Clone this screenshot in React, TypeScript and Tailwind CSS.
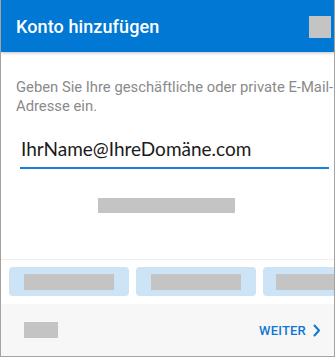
export default function App() {
  return (
    <div
      className="w-[335px] h-[357px] bg-white border-x border-b border-[#a3a3a3] flex flex-col overflow-hidden"
      style={{ fontFamily: "Roboto, 'Noto Sans', sans-serif" }}
    >
      <div className="h-[52px] shrink-0 bg-[#0078d4] flex items-center justify-between pl-[15px] pr-[3px] shadow-[0_1px_3px_rgba(0,0,0,0.25)] relative z-10">
        <div className="text-white text-[18px] font-medium tracking-[0.1px]">Konto hinzufügen</div>
        <div className="w-[22px] h-[22px] bg-[#c4c4c4] mt-[2px]" />
      </div>

      <div className="flex-1 flex flex-col">
        <p className="mt-[26px] pl-[15px] text-[14.8px] leading-[19px] text-[#8a8a8a] whitespace-nowrap">
          Geben Sie Ihre geschäftliche oder private E-Mail-
          <br />
          Adresse ein.
        </p>

        <div className="mt-[19px] ml-[19px] mr-[5px] border-b-2 border-[#1a7fd8] pb-[5px]">
          <div
            className="text-[19px] leading-[27px] text-[#1b1b1b] pl-[1px]"
            style={{ fontFamily: "Lato, 'Open Sans', sans-serif" }}
          >
            IhrName@IhreDomäne.com
          </div>
        </div>

        <div className="mt-[29px] flex justify-center pr-[2px]">
          <div className="w-[137px] h-[15px] bg-[#c4c4c4]" />
        </div>

        <div className="mt-[46px] border-t border-[#efefef]" />

        <div className="mt-[7px] flex gap-[7px] pl-[8px] mb-[8px]">
          <div className="w-[120px] h-[29px] shrink-0 rounded-[4px] bg-[#cce4f6] flex items-center pl-[15px]">
            <div className="w-[90px] h-[16px] bg-[#c4c4c4]" />
          </div>
          <div className="w-[120px] h-[29px] shrink-0 rounded-[4px] bg-[#cce4f6] flex items-center pl-[15px]">
            <div className="w-[90px] h-[16px] bg-[#c4c4c4]" />
          </div>
          <div className="w-[120px] h-[29px] shrink-0 rounded-[4px] bg-[#cce4f6] flex items-center pl-[13px]">
            <div className="w-[90px] h-[16px] bg-[#c4c4c4]" />
          </div>
        </div>

        <div className="flex-1 bg-[#f7f7f7] flex items-center justify-between pl-[23px] pr-[13px]">
          <div className="w-[34px] h-[16px] bg-[#c4c4c4]" />
          <div className="flex items-center gap-[7px] text-[#0f78d4] text-[13px] font-medium tracking-[0.2px] pt-[1px]">
            WEITER
            <svg width="8" height="13" viewBox="0 0 8 13" fill="none">
              <path d="M1.5 1.5 L6 6.5 L1.5 11.5" stroke="#0f78d4" strokeWidth="2" strokeLinecap="round" strokeLinejoin="round" />
            </svg>
          </div>
        </div>
      </div>
    </div>
  );
}
